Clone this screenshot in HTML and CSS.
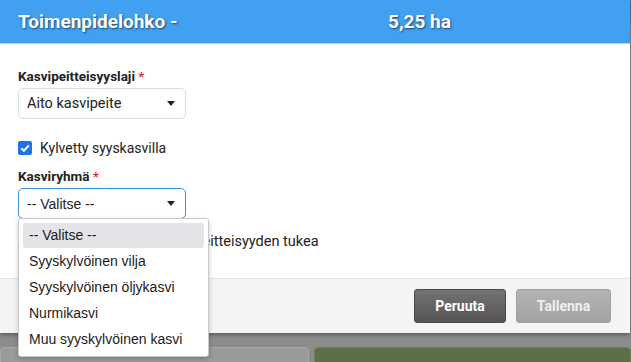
FILE: index.html
```html
<!DOCTYPE html>
<html lang="fi">
<head>
<meta charset="utf-8">
<title>Toimenpidelohko</title>
<link rel="stylesheet" href="styles.css">
</head>
<body>
<div class="page">
  <div class="modal">
    <div class="modal-header">
      <span class="title">Toimenpidelohko -</span>
      <span class="area">5,25 ha</span>
    </div>
    <div class="modal-body">
      <div class="field">
        <label class="label">Kasvipeitteisyyslaji <span class="req">*</span></label>
        <div class="select"><span>Aito kasvipeite</span><span class="caret"></span></div>
      </div>
      <div class="check-row">
        <span class="checkbox checked"><svg viewBox="0 0 14 14" width="14" height="14"><path d="M3.2 7.2 L5.9 9.8 L10.9 4.4" fill="none" stroke="#fff" stroke-width="2"/></svg></span>
        <span>Kylvetty syyskasvilla</span>
      </div>
      <div class="field field-2">
        <label class="label">Kasviryhmä <span class="req">*</span></label>
        <div class="select-wrap">
          <div class="select focused native"><span>-- Valitse --</span><span class="caret"></span></div>
          <ul class="dropdown">
            <li class="active">-- Valitse --</li>
            <li>Syyskylvöinen vilja</li>
            <li>Syyskylvöinen öljykasvi</li>
            <li>Nurmikasvi</li>
            <li>Muu syyskylvöinen kasvi</li>
          </ul>
        </div>
      </div>
      <div class="check-row check-row-2">
        <span class="checkbox"></span>
        <span>Haen talviaikaisen kasvipeitteisyyden tukea</span>
      </div>
    </div>
    <div class="modal-footer">
      <button class="btn btn-dark">Peruuta</button>
      <button class="btn btn-light">Tallenna</button>
    </div>
  </div>
  <div class="underlay">
    <div class="panel panel-gray"></div>
    <div class="panel panel-green"></div>
  </div>
</div>
</body>
</html>
```

FILE: styles.css
```css
html, body {
  margin: 0;
  padding: 0;
}
body {
  width: 631px;
  height: 362px;
  overflow: hidden;
  font-family: Roboto, "Liberation Sans", sans-serif;
  color: #222;
  background: linear-gradient(#6a6a6a, #8c8c8c 40px);
}
.page {
  display: flex;
  flex-direction: column;
}
.modal {
  width: 630px;
  background: #fff;
  box-shadow: 0 2px 4px rgba(0,0,0,0.35);
  position: relative;
  z-index: 1;
}
.modal-header {
  height: 43px;
  background: #41a0f2;
  border-bottom: 1px solid #b4d6f5;
  display: flex;
  align-items: center;
  color: #fff;
  font-weight: 700;
  font-size: 19px;
  text-shadow: 1px 1px 2px rgba(0,0,0,0.55);
}
.title {
  padding-left: 18px;
  width: 370px;
}
.modal-body {
  height: 234px;
  padding: 0 18px;
  box-sizing: border-box;
  padding-top: 24px;
  font-size: 13px;
}
.label {
  display: block;
  font-weight: 700;
  font-size: 13.5px;
  color: #222;
  margin-bottom: 4px;
}
.req {
  color: #d33;
}
.select {
  width: 168px;
  height: 31px;
  box-sizing: border-box;
  border: 1px solid #dcdcdc;
  border-radius: 5px;
  display: flex;
  align-items: center;
  justify-content: space-between;
  padding: 0 10px 0 8px;
  font-size: 14.5px;
  color: #222;
  background: #fff;
}
.select.native {
  font-family: "Liberation Sans", Arial, sans-serif;
  font-size: 14px;
}
.select.focused {
  border: 1.5px solid #3b8fe3;
}
.caret {
  width: 0;
  height: 0;
  border-left: 4px solid transparent;
  border-right: 4px solid transparent;
  border-top: 5px solid #222;
}
.check-row {
  display: flex;
  align-items: center;
  gap: 8px;
  margin-top: 21px;
  font-size: 14px;
}
.checkbox {
  width: 14px;
  height: 14px;
  box-sizing: border-box;
  border: 1px solid #777;
  border-radius: 2px;
  display: inline-flex;
}
.checkbox.checked {
  background: #1a73e8;
  border-color: #1a73e8;
}
.checkbox svg {
  margin: -1px;
}
.field-2 {
  margin-top: 12px;
}
.select-wrap {
  position: relative;
}
.dropdown {
  position: absolute;
  left: 0;
  top: 30px;
  width: 191px;
  height: 139px;
  box-sizing: border-box;
  margin: 0;
  padding: 4px;
  list-style: none;
  background: #fff;
  border: 1px solid #c9c9c9;
  border-radius: 3px;
  box-shadow: 0 2px 5px rgba(0,0,0,0.2);
  z-index: 5;
  font-family: "Liberation Sans", Arial, sans-serif;
  font-size: 14px;
  color: #1b1b1b;
}
.dropdown li {
  height: 26px;
  line-height: 26px;
  padding-left: 6px;
}
.dropdown li.active {
  background: #e3e3e8;
  border-radius: 3px;
  height: 25px;
  line-height: 25px;
}
.check-row-2 {
  margin-top: 14px;
  font-size: 14.5px;
}
.modal-footer {
  height: 55px;
  background: #f4f4f4;
  border-top: 1px solid #e6e6e6;
  box-sizing: border-box;
  display: flex;
  justify-content: flex-end;
  align-items: center;
  gap: 10px;
  padding-right: 19px;
}
.btn {
  height: 34px;
  border-radius: 3px;
  font-family: Roboto, "Liberation Sans", sans-serif;
  font-weight: 700;
  font-size: 14px;
  color: #fff;
  padding: 0;
}
.btn-dark {
  width: 92px;
  background: linear-gradient(#737373, #545454);
  border: 1px solid #4a4a4a;
}
.btn-light {
  width: 95px;
  background: linear-gradient(#b4b4b4, #a2a2a2);
  border: 1px solid #a0a0a0;
  color: #f0f0f0;
}
.underlay {
  display: flex;
  gap: 5px;
  padding-top: 14px;
}
.panel {
  height: 30px;
  border-radius: 4px 4px 0 0;
}
.panel-gray {
  width: 307px;
  background: #9a9a9a;
  border: 1px solid #a8a8a8;
}
.panel-green {
  flex: 1;
  background: #5b7046;
  border: 1px solid #6e8458;
}
```
